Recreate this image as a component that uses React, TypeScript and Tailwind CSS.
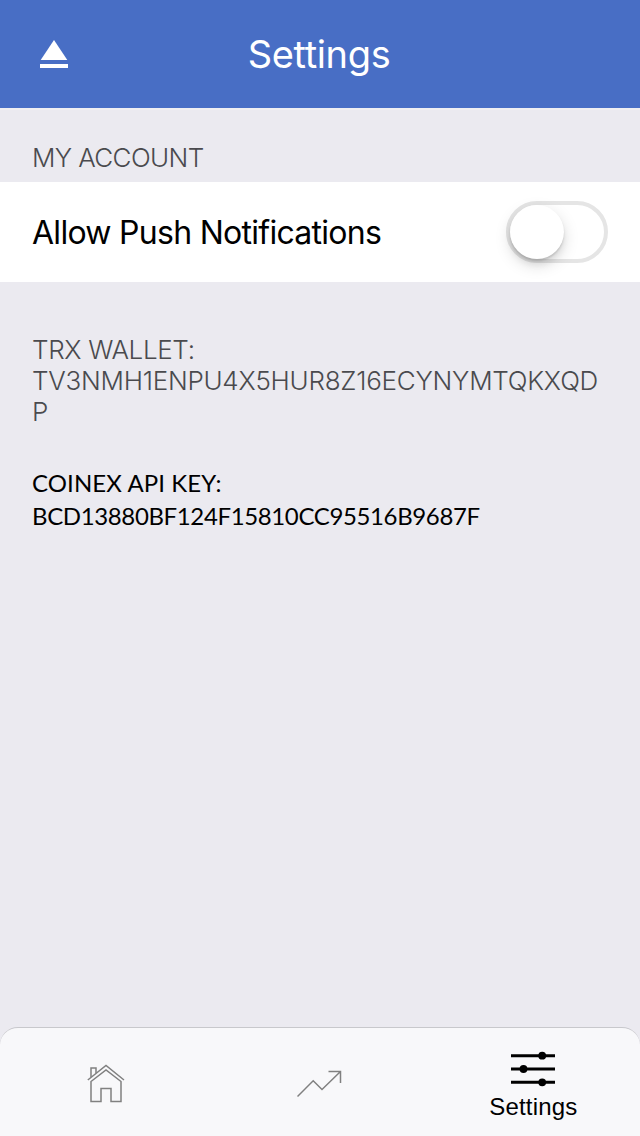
import React from "react";

function Header() {
  return (
    <header className="grid h-[108px] shrink-0 grid-cols-[108px_1fr_108px] items-center bg-[#486ec5] text-white">
      <button aria-label="Eject" className="flex justify-center">
        <svg width="28" height="28" viewBox="0 0 28 28" fill="currentColor">
          <path d="M14 0L27.3 20H0.7Z" />
          <path d="M0 24H28V28H0Z" />
        </svg>
      </button>
      <h1 className="pr-0.5 text-center text-[38px] leading-[46px] font-normal tracking-[-0.35px]">Settings</h1>
    </header>
  );
}

function Toggle() {
  return (
    <button
      role="switch"
      aria-checked="false"
      aria-label="Allow Push Notifications"
      className="flex h-[62px] w-[102px] items-center rounded-full border-4 border-[#e5e5e5] bg-white"
    >
      <span className="size-[54px] rounded-full bg-white shadow-[0_6px_16px_rgba(0,0,0,0.15),0_2px_2px_rgba(0,0,0,0.12),0_6px_6px_rgba(0,0,0,0.06)]" />
    </button>
  );
}

function TabBar() {
  return (
    <nav className="grid h-[109px] shrink-0 grid-cols-3 rounded-t-[18px] border-t border-[#c8c8cc] bg-[#f8f8fa]">
      <button aria-label="Home" className="flex items-start justify-center pt-9 pr-0.5">
        <svg width="40" height="40" viewBox="0 0 40 40" fill="none" stroke="#808080" strokeWidth="1.5">
          <path d="M1.8 16L20 1.5L38 16" />
          <path d="M5 13V4H10V9" />
          <path d="M5 17.5L20 6L35 17.5V37.5H25V24.5H15V37.5H5Z" />
        </svg>
      </button>
      <button aria-label="Trends" className="flex items-start justify-center pt-[42px]">
        <svg width="46" height="28" viewBox="0 0 46 28" fill="none" stroke="#808080" strokeWidth="1.5">
          <path d="M0.5 26.5L16.2 10.8L25 19.5L43.5 1.5M31.5 1.5H43.5V13" />
        </svg>
      </button>
      <button className="flex flex-col items-center pt-[23px] text-black">
        <svg width="44" height="36" viewBox="0 0 44 36" fill="currentColor">
          <path d="M0 3.2H44V6.2H0ZM0 16.5H44V19.5H0ZM0 29.8H44V32.8H0Z" />
          <circle cx="31.2" cy="4.7" r="3.9" />
          <circle cx="12.5" cy="18" r="3.9" />
          <circle cx="31.2" cy="31.3" r="3.9" />
        </svg>
        <span className="mt-1.5 font-['Liberation_Sans',sans-serif] text-[24px] leading-7 tracking-[0.15px]">Settings</span>
      </button>
    </nav>
  );
}

export default function App() {
  return (
    <div className="flex h-[1136px] w-[640px] flex-col overflow-hidden bg-[#ebeaf0] font-['Inter',sans-serif]">
      <Header />
      <main className="flex-1 border-t-2 border-[#efeff2]">
        <h2 className="h-[72px] px-8 pt-8 text-[26px] leading-8 font-light tracking-[-0.62px] text-[#4a4a4e]">MY ACCOUNT</h2>
        <section className="flex h-[100px] items-center justify-between bg-white px-8 text-black">
          <span className="pt-px text-[32px] leading-10 tracking-[-0.72px]">Allow Push Notifications</span>
          <Toggle />
        </section>
        <p className="px-8 pt-[52px] text-[26px] leading-[31px] font-light text-[#4a4a4e]">
          <span className="tracking-[-0.35px]">TRX WALLET:</span><br />
          <span className="tracking-[-0.25px]">TV3NMH1ENPU4X5HUR8Z16ECYNYMTQKXQD</span><br />
          P
        </p>
        <p className="px-8 pt-[39px] font-['Lato',sans-serif] text-[24px] leading-[33px] text-black">
          <span className="tracking-[0.1px]">COINEX API KEY:</span><br />
          <span className="tracking-[-0.37px]">BCD13880BF124F15810CC95516B9687F</span>
        </p>
      </main>
      <TabBar />
    </div>
  );
}
